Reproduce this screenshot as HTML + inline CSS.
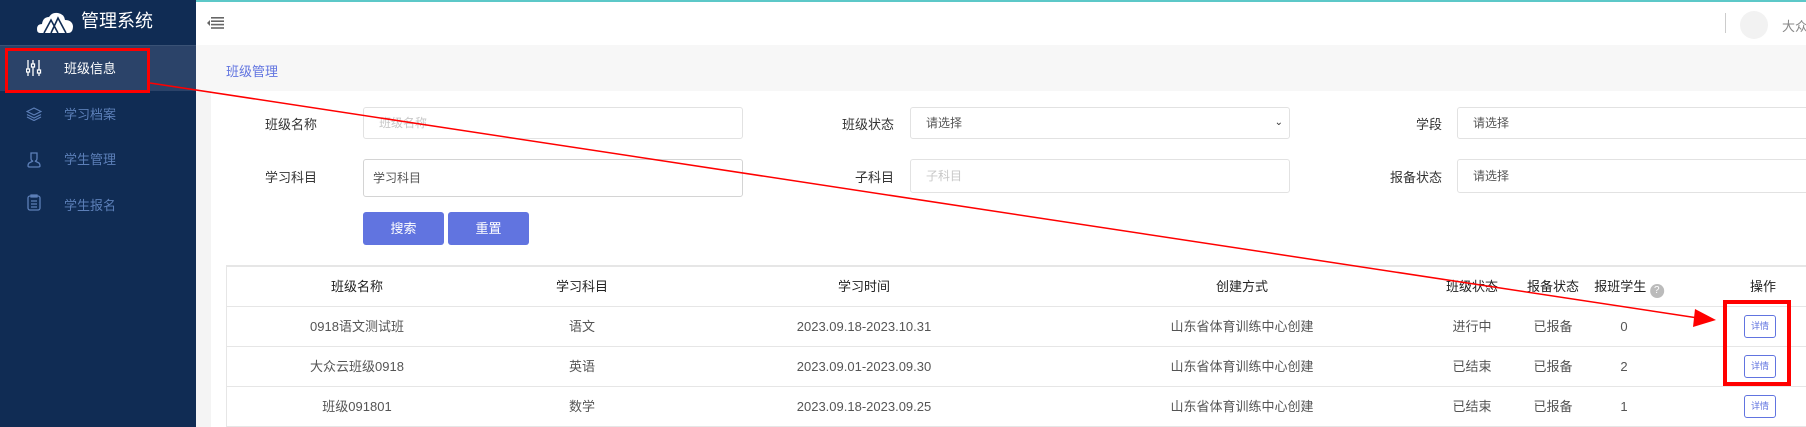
<!DOCTYPE html>
<html><head><meta charset="utf-8"><style>
*{margin:0;padding:0;box-sizing:border-box}
body{width:1806px;height:427px;overflow:hidden;background:#f4f4f4;font-family:"Liberation Sans","Noto Sans CJK SC",sans-serif;position:relative;color:#333}
.a{position:absolute}
.side{left:0;top:0;width:196px;height:427px;background:#102c54}
.mi{position:absolute;left:64px;font-size:13px;color:#5c7fb8;line-height:16px}
.lbl{position:absolute;font-size:13px;color:#333;text-align:right;width:80px;line-height:16px}
.inp{position:absolute;background:#fff;border:1px solid #e2e2e2;border-radius:3px;font-size:12px;color:#555;padding-left:15px}
.btn{position:absolute;background:#6174e0;color:#fff;font-size:13px;text-align:center;border-radius:3px;top:212px;height:33px;line-height:33px;width:81px}
.row{position:absolute;left:227px;width:1579px;border-bottom:1px solid #e6e6e6;height:40px}
.c{position:absolute;top:0;line-height:40px;font-size:13px;color:#555;transform:translateX(-50%);white-space:nowrap}
.h .c{color:#222}
.det{position:absolute;left:1517px;top:8px;width:32px;height:23px;border:1px solid #6174e0;border-radius:3px;color:#6174e0;font-size:9px;line-height:21px;text-align:center}
</style></head><body>
<div class="a" style="left:0;top:0;width:1806px;height:2px;background:#5cc8c8"></div>
<div class="a" style="left:196px;top:2px;width:1610px;height:43px;background:#fff"></div>
<div class="a" style="left:196px;top:45px;width:1610px;height:46px;background:#f7f7f7"></div>
<div class="a" style="left:211px;top:91px;width:1595px;height:336px;background:#fff"></div>
<div class="a side"></div>
<svg class="a" style="left:37px;top:12px" width="36" height="22" viewBox="0 0 36 22"><path d="M3 21 Q0 21 0 17 Q0 12 5 12 Q6 5 12 5 Q15 0 21 1 Q27 2 28 8 Q35 8 36 14 Q36 21 31 21Z" fill="#fff"/><path d="M7 21 L14 8 L21 21 M14 21 L21 6 L29 21" stroke="#102c54" stroke-width="1.6" fill="none"/></svg>
<div class="a" style="left:81px;top:9px;font-size:18px;color:#fff;line-height:24px">管理系统</div>
<div class="a" style="left:0;top:45px;width:196px;height:1px;background:#3a5275"></div>
<div class="a" style="left:0;top:46px;width:196px;height:45px;background:#2b4369"></div>
<svg class="a" style="left:26px;top:60px" width="16" height="16" viewBox="0 0 16 16" stroke="#fff" stroke-width="1.3" fill="none"><path d="M2 0V16M7 0V16M13 0V16"/><rect x="0.5" y="9" width="3" height="3" fill="#102c54"/><rect x="5.5" y="4" width="3" height="3" fill="#102c54"/><rect x="11.5" y="10" width="3" height="3" fill="#102c54"/></svg>
<div class="mi" style="top:61px;color:#fff">班级信息</div>
<svg class="a" style="left:26px;top:107px" width="16" height="14" viewBox="0 0 16 14" stroke="#5c7fb8" stroke-width="1.2" fill="none"><path d="M8 1L15 4.5 8 8 1 4.5Z M1 7.5L8 11 15 7.5 M1 10L8 13.5 15 10"/></svg>
<div class="mi" style="top:107px">学习档案</div>
<svg class="a" style="left:27px;top:152px" width="14" height="16" viewBox="0 0 14 16" stroke="#5c7fb8" stroke-width="1.3" fill="none"><path d="M4 1H10V6Q10 9 8 9 L12 11 Q13 12 13 14 Q13 15 11 15H3Q1 15 1 14 Q1 12 2 11L6 9Q4 9 4 6Z"/></svg>
<div class="mi" style="top:152px">学生管理</div>
<svg class="a" style="left:27px;top:194px" width="14" height="17" viewBox="0 0 14 17" stroke="#5c7fb8" stroke-width="1.3" fill="none"><rect x="1" y="2" width="12" height="14" rx="2"/><path d="M4 1H10V3H4Z M4 7H10M4 10H10M4 13H10"/></svg>
<div class="mi" style="top:198px">学生报名</div>
<svg class="a" style="left:207px;top:17px" width="18" height="12" viewBox="0 0 18 12" fill="#666"><path d="M0 6L3 3V9Z"/><rect x="4" y="0" width="13" height="1.6"/><rect x="4" y="3.4" width="13" height="1.6"/><rect x="4" y="6.8" width="13" height="1.6"/><rect x="4" y="10.2" width="13" height="1.6"/></svg>
<div class="a" style="left:1725px;top:13px;width:1px;height:20px;background:#ccc"></div>
<div class="a" style="left:1740px;top:11px;width:28px;height:28px;border-radius:50%;background:#f2f2f2"></div>
<div class="a" style="left:1782px;top:16px;font-size:13px;color:#888;white-space:nowrap">大众</div>
<div class="a" style="left:226px;top:61px;font-size:13px;color:#6174e0">班级管理</div>

<div class="lbl" style="left:237px;top:117px">班级名称</div>
<div class="inp" style="left:363px;top:107px;width:380px;height:32px;line-height:30px;color:#c8c8c8">班级名称</div>
<div class="lbl" style="left:237px;top:170px">学习科目</div>
<div class="inp" style="left:363px;top:159px;width:380px;height:38px;line-height:36px;border-color:#d4d4d4;padding-left:9px">学习科目</div>
<div class="lbl" style="left:814px;top:117px">班级状态</div>
<div class="inp" style="left:910px;top:107px;width:380px;height:32px;line-height:30px">请选择<span style="position:absolute;right:6px;top:0;font-size:10px;color:#333">⌄</span></div>
<div class="lbl" style="left:814px;top:170px">子科目</div>
<div class="inp" style="left:910px;top:159px;width:380px;height:34px;line-height:32px;color:#c8c8c8">子科目</div>
<div class="lbl" style="left:1362px;top:117px">学段</div>
<div class="inp" style="left:1457px;top:107px;width:360px;height:32px;line-height:30px">请选择</div>
<div class="lbl" style="left:1362px;top:170px">报备状态</div>
<div class="inp" style="left:1457px;top:159px;width:360px;height:34px;line-height:32px">请选择</div>
<div class="btn" style="left:363px">搜索</div>
<div class="btn" style="left:448px">重置</div>

<div class="a" style="left:227px;top:265px;width:1579px;height:2px;background:#e6e6e6"></div>
<div class="a" style="left:226px;top:265px;width:1px;height:162px;background:#e6e6e6"></div>
<div class="row h" style="top:267px"><div class="c" style="left:130px">班级名称</div><div class="c" style="left:355px">学习科目</div><div class="c" style="left:637px">学习时间</div><div class="c" style="left:1015px">创建方式</div><div class="c" style="left:1245px">班级状态</div><div class="c" style="left:1326px">报备状态</div><div class="c" style="left:1402px">报班学生 <span style="display:inline-block;width:14px;height:14px;border-radius:50%;background:#bbb;color:#fff;font-size:10px;line-height:14px;text-align:center;vertical-align:-2px">?</span></div><div class="c" style="left:1536px">操作</div></div>
<div class="row" style="top:307px"><div class="c" style="left:130px">0918语文测试班</div><div class="c" style="left:355px">语文</div><div class="c" style="left:637px">2023.09.18-2023.10.31</div><div class="c" style="left:1015px">山东省体育训练中心创建</div><div class="c" style="left:1245px">进行中</div><div class="c" style="left:1326px">已报备</div><div class="c" style="left:1397px">0</div><div class="det">详情</div></div>
<div class="row" style="top:347px"><div class="c" style="left:130px">大众云班级0918</div><div class="c" style="left:355px">英语</div><div class="c" style="left:637px">2023.09.01-2023.09.30</div><div class="c" style="left:1015px">山东省体育训练中心创建</div><div class="c" style="left:1245px">已结束</div><div class="c" style="left:1326px">已报备</div><div class="c" style="left:1397px">2</div><div class="det">详情</div></div>
<div class="row" style="top:387px"><div class="c" style="left:130px">班级091801</div><div class="c" style="left:355px">数学</div><div class="c" style="left:637px">2023.09.18-2023.09.25</div><div class="c" style="left:1015px">山东省体育训练中心创建</div><div class="c" style="left:1245px">已结束</div><div class="c" style="left:1326px">已报备</div><div class="c" style="left:1397px">1</div><div class="det">详情</div></div>

<div class="a" style="left:5px;top:48px;width:145px;height:45px;border:3px solid #f00"></div>
<div class="a" style="left:1723px;top:300px;width:68px;height:86px;border:4px solid #f00"></div>
<svg class="a" style="left:0;top:0" width="1806" height="427"><line x1="150" y1="83" x2="1698" y2="318" stroke="#f00" stroke-width="1.5"/><path d="M1716 320L1695 309L1693 327Z" fill="#f00"/></svg>
</body></html>
